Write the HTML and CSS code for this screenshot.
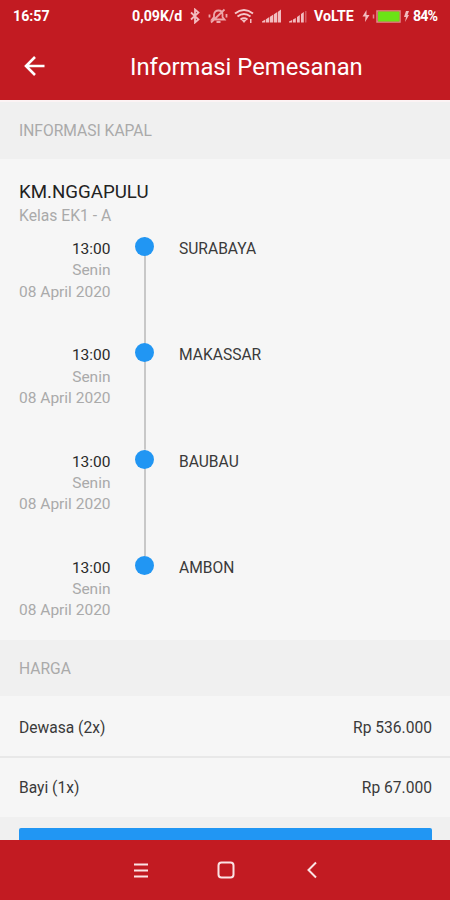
FILE: index.html
```html
<!DOCTYPE html>
<html lang="id">
<head>
  <meta charset="UTF-8">
  <meta name="viewport" content="width=device-width, initial-scale=1">
  <title>Informasi Pemesanan</title>
  <link rel="stylesheet" href="styles.css">
</head>
<body>
  <div class="app">
    <header class="header">
      <div class="status">
        <span class="clock">16:57</span>
        <span class="speed">0,09K/d</span>
        <svg class="bluetooth" width="10" height="16" viewBox="0 0 10 16"><path d="M1 4.500l7.500 7L5 14.500v-13l3.500 3-7.500 7"/></svg>
        <svg class="mute" width="20" height="16" viewBox="0 0 20 16"><path d="M4 11.500L6 9V6.500C6.500 3.500 8 2.500 10.500 2.500s4 1.500 4 4V9l2 2.500zM8.500 14h4M3 14.500L16.500 1.500M1.500 6.500v3M18.500 6v3.500"/></svg>
        <svg class="wifi" width="20" height="16" viewBox="0 0 20 16"><path d="M1 5.500q9-7 18 0M3.500 8.500q6.500-5 13 0M6.500 11.500q3.500-2.500 7 0"/><path class="fill" d="M7.500 12h5L10 15zM16 11h1.500v4H16z"/></svg>
        <svg class="signal" width="20" height="14" viewBox="0 0 20 14"><path class="fill" d="M0 13.500h3.300v-3l-3.300 2zM4 13.500h3.300V8L4 10.300zM8 13.500h3.300V5.500L8 7.800zM12 13.500h3.300V3L12 5.300zM16 13.500h3V.5L16 2.800z"/></svg>
        <svg class="signal small" width="18" height="12" viewBox="0 0 18 12"><path class="fill" d="M0 11.500h3.200V9l-3.200 1.500zM4 11.500h2.800V7L4 8.500zM8 11.500h2.800V4L8 6zM12 11.500h2.800V1L12 3z"/><path class="faint" d="M16 0h1.500v11.500H16z"/></svg>
        <span class="volte">VoLTE</span>
        <svg class="bolt" width="8" height="12" viewBox="0 0 8 12"><path class="fill" d="M4.500 0L.5 6.500h3L3 12l4.500-7h-3z"/></svg>
        <svg class="battery" width="29" height="13" viewBox="0 0 29 13"><path class="case" d="M5 1h23v11H5zM1.500 4.500v4"/><path class="charge" d="M6 1.500h21.500v10H6z"/></svg>
        <svg class="bolt-small" width="5" height="11" viewBox="0 0 5 11"><path class="fill" d="M2 0h3L3.500 4H5L1 11l1-5H0z"/></svg>
        <span class="percent">84%</span>
      </div>
      <div class="toolbar">
        <svg class="back" width="22" height="22" viewBox="0 0 22 22"><path d="M20.500 11H2.500M11 2L2 11l9 9"/></svg>
        <h1>Informasi Pemesanan</h1>
      </div>
    </header>

    <main class="content">
      <h2 class="section">INFORMASI KAPAL</h2>
      <div class="ship">
        <div class="ship-name">KM.NGGAPULU</div>
        <div class="ship-class">Kelas EK1 - A</div>
        <ul class="route">
          <li class="stop">
            <div class="time"><b>13:00</b><br>Senin<br>08 April 2020</div>
            <div class="track"><i class="dot"></i></div>
            <div class="port">SURABAYA</div>
          </li>
          <li class="stop">
            <div class="time"><b>13:00</b><br>Senin<br>08 April 2020</div>
            <div class="track"><i class="dot"></i></div>
            <div class="port">MAKASSAR</div>
          </li>
          <li class="stop">
            <div class="time"><b>13:00</b><br>Senin<br>08 April 2020</div>
            <div class="track"><i class="dot"></i></div>
            <div class="port">BAUBAU</div>
          </li>
          <li class="stop">
            <div class="time"><b>13:00</b><br>Senin<br>08 April 2020</div>
            <div class="track"><i class="dot"></i></div>
            <div class="port">AMBON</div>
          </li>
        </ul>
      </div>

      <h2 class="section price-title">HARGA</h2>
      <div class="price"><span>Dewasa (2x)</span><span>Rp 536.000</span></div>
      <div class="price"><span>Bayi (1x)</span><span>Rp 67.000</span></div>
      <div class="action"><div class="button"></div></div>
    </main>

    <nav class="navbar">
      <svg class="menu" width="16" height="18" viewBox="0 0 16 18"><path d="M1 3.500h14M1 9.500h14M1 15.500h14"/></svg>
      <svg class="home" width="18" height="18" viewBox="0 0 18 18"><rect x="1.500" y="1.500" width="15" height="15" rx="3"/></svg>
      <svg width="10" height="18" viewBox="0 0 10 18"><path d="M9 1.500L1.500 9 9 16.500"/></svg>
    </nav>
  </div>
</body>
</html>
```

FILE: styles.css
```css
* { box-sizing: border-box; }
body {
  margin: 0;
  font-family: Roboto, "Liberation Sans", sans-serif;
  color: #3a3a3a;
  background: #f6f6f6;
}
h1, h2, ul { margin: 0; padding: 0; font-weight: 400; }
svg {
  display: block;
  flex: none;
  fill: none;
  stroke: #fbe3e4;
  stroke-width: 1.5;
}
.app {
  display: flex;
  flex-direction: column;
  height: 900px;
  overflow: hidden;
}

/* header */
.header {
  flex: none;
  height: 100px;
  background: #c21b22;
  color: #fff;
}
.status {
  display: flex;
  align-items: center;
  height: 32px;
  padding-left: 13px;
  font-size: 14.2px;
  font-weight: 700;
  white-space: nowrap;
}
.status span { flex: none; }
.status .fill { fill: #f2bcbf; stroke: none; }
.clock { width: 119px; }
.speed { width: 58px; }
.bluetooth { margin-right: 8px; stroke: #f2bcbf; stroke-width: 1.8; }
.mute { margin-right: 6px; stroke: #eda5a9; stroke-width: 1.8; }
.wifi { margin-right: 8px; stroke: #f5c9cb; stroke-width: 1.9; }
.signal { margin-right: 7px; }
.small { margin: 2px 7px 0 0; }
.faint { fill: #d65a60; stroke: none; }
.volte { width: 48px; }
.bolt { margin-right: 2px; }
.battery { margin-right: 3px; }
.case { stroke: #e4888c; }
.charge { fill: #6be316; stroke: none; }
.bolt-small { margin-right: 4px; }
.percent { letter-spacing: -0.9px; }
.toolbar {
  display: flex;
  align-items: center;
  height: 68px;
  padding-left: 24px;
}
.back { stroke: #fff; stroke-width: 2.6; }
.toolbar h1 {
  margin: 2px 0 0 84px;
  font-size: 23.8px;
  line-height: 28px;
}

/* content */
.content {
  flex: 1;
  min-height: 0;
  overflow: hidden;
}
.section {
  height: 59px;
  padding: 1px 19px 0;
  border-top: 2px solid #fcf3f4;
  background: #f0f0f0;
  color: #aaa;
  font-size: 15.6px;
  line-height: 57px;
}
.ship {
  height: 481px;
  padding: 21px 19px 0;
}
.ship-name {
  color: #222;
  font-size: 18.7px;
  line-height: 25px;
}
.ship-class {
  color: #aaa;
  font-size: 15.7px;
  line-height: 22px;
}
.route { margin-top: 10px; list-style: none; }
.stop { display: flex; height: 106.3px; }
.time {
  width: 91.5px;
  padding-top: 2px;
  color: #aaa;
  font-size: 15.5px;
  line-height: 21.3px;
  text-align: right;
  white-space: nowrap;
}
.time b { color: #2a2a2a; font-weight: 400; }
.track {
  width: 19px;
  margin-left: 24.5px;
  background: linear-gradient(#c8c8c8, #c8c8c8) center / 2px 100% no-repeat;
}
.stop:last-child .track { background: none; }
.dot {
  display: block;
  width: 19px;
  height: 19px;
  border-radius: 50%;
  background: #2196f3;
}
.port {
  margin-left: 25px;
  padding-top: 2px;
  font-size: 15.6px;
  line-height: 21.3px;
}
.price-title {
  height: 56px;
  border-top: 0;
}
.price {
  display: flex;
  justify-content: space-between;
  height: 60px;
  padding: 0 18px 0 19px;
  font-size: 15.6px;
  line-height: 64px;
}
.price + .price {
  height: 61px;
  border-top: 2px solid #e8e8e8;
  line-height: 61px;
}
.action {
  height: 30px;
  padding: 11px 18px 0 19px;
  background: #f0f0f0;
}
.button {
  height: 48px;
  border-radius: 2px;
  background: #2196f3;
}

/* bottom navigation */
.navbar {
  display: flex;
  flex: none;
  align-items: center;
  height: 60px;
  padding-left: 133px;
  background: #c21b22;
}
.navbar svg { stroke-width: 2; }
.menu { margin-right: 68px; }
.home { margin-right: 72px; }
```
